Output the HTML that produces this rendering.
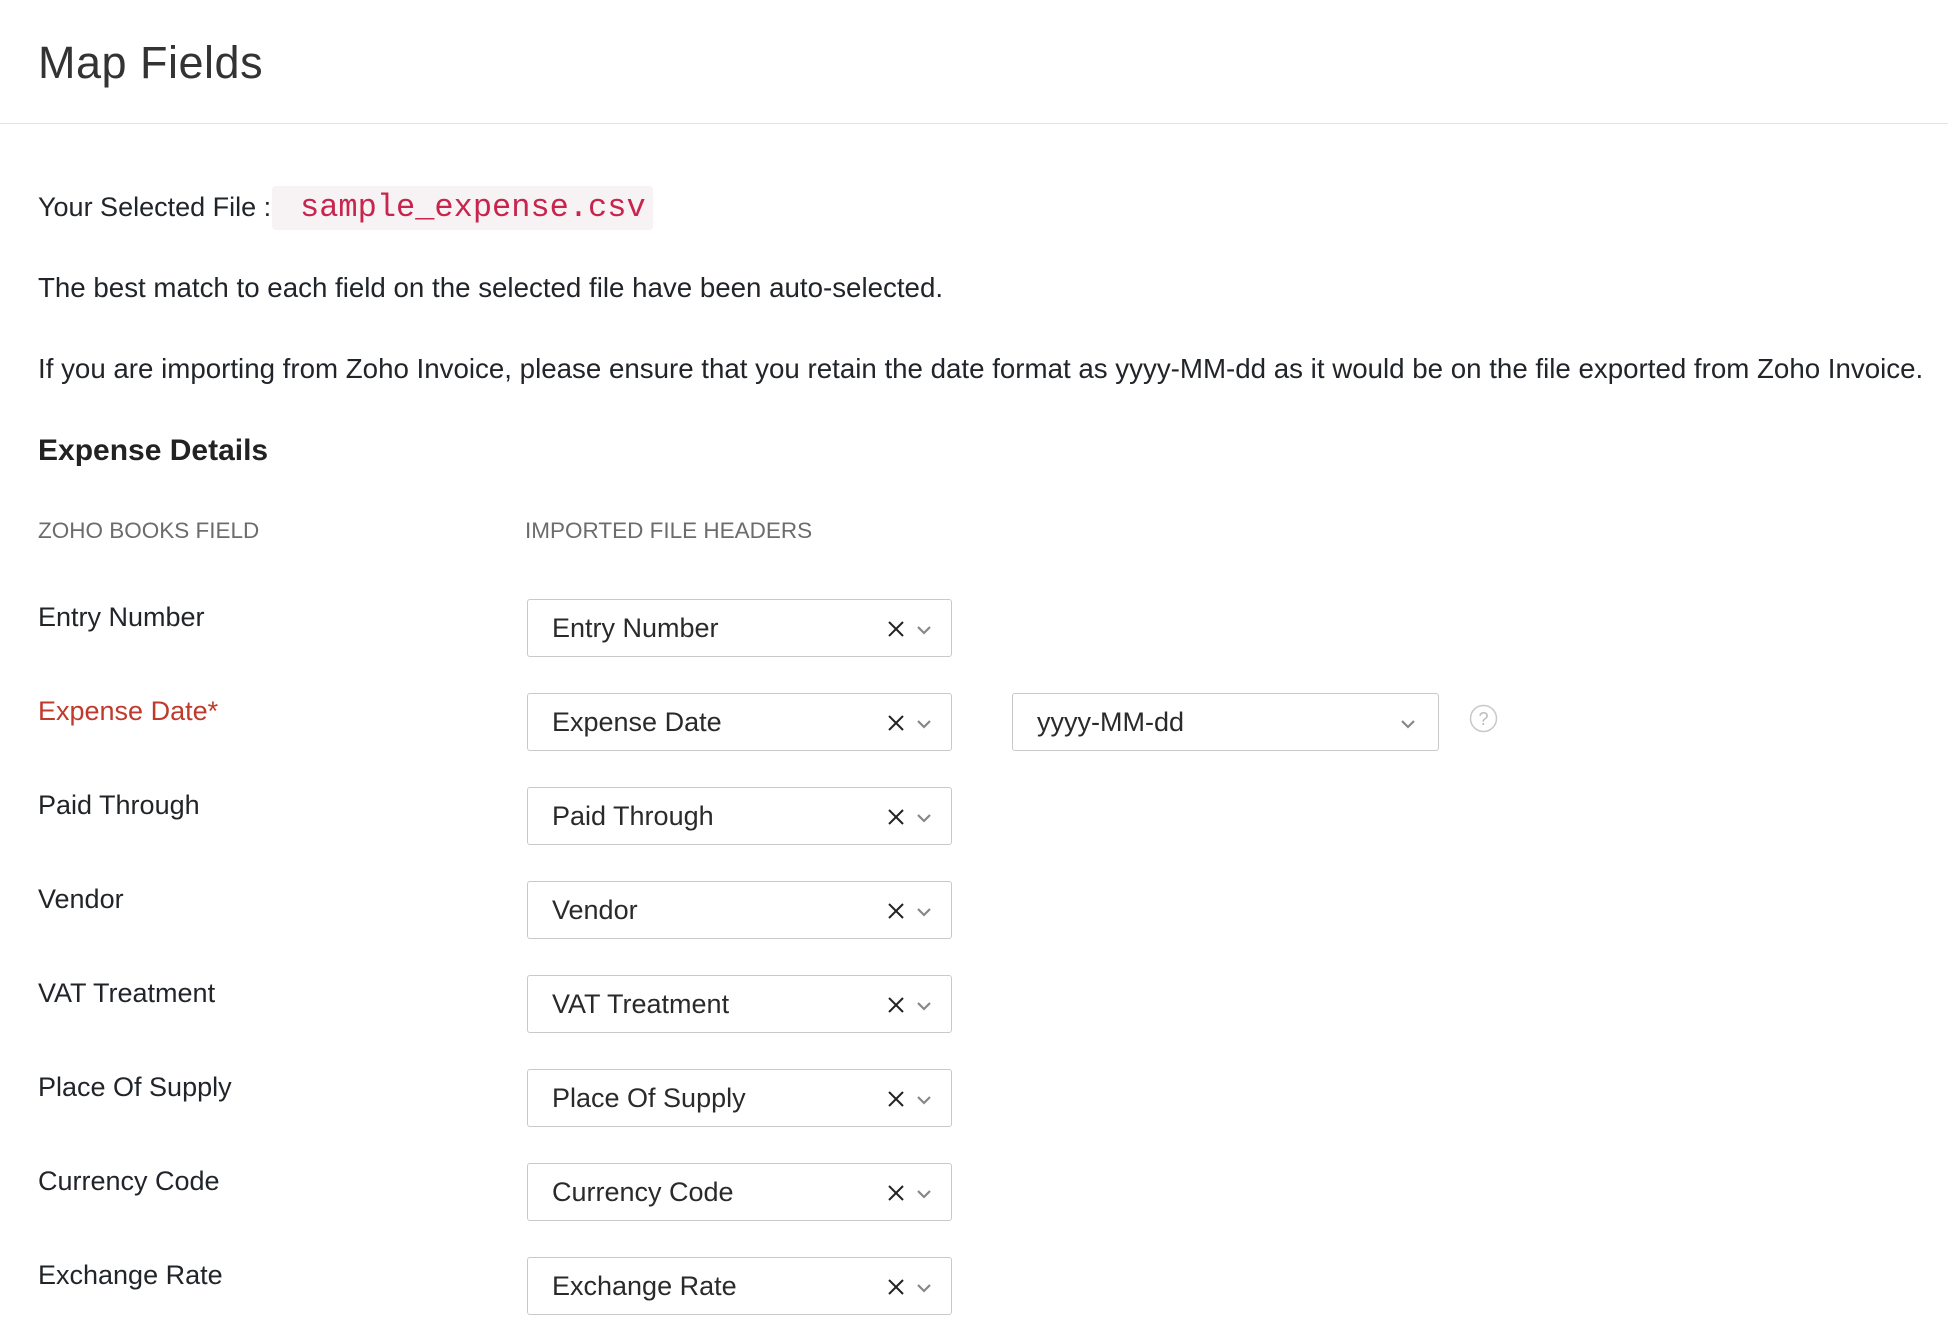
<!DOCTYPE html>
<html><head><meta charset="utf-8"><style>
*{margin:0;padding:0;box-sizing:border-box}
body{width:1948px;height:1340px;background:#fff;font-family:"Liberation Sans",sans-serif;color:#212529;position:relative;overflow:hidden}
.a{position:absolute;white-space:nowrap}
.hdr{position:absolute;left:0;top:0;width:1948px;height:124px;border-bottom:1px solid #e3e3e3}
.t{font-size:45px;left:38px;top:37px;color:#333;letter-spacing:0.5px}
.p{font-size:27.7px;left:38px}
.code{position:absolute;left:272px;top:186px;width:381px;height:44px;background:#f7f2f3;border-radius:4px;font-family:"Liberation Mono",monospace;color:#c7254e;font-size:32px;line-height:44px;padding-left:28px}
.h{font-size:22.5px;color:#6c6c6c;top:518px}
.lbl{font-size:27px;left:38px}
.box{position:absolute;left:527px;width:425px;height:58px;border:1px solid #c9c9c9;border-radius:3px;font-size:27px;line-height:56px;padding-left:24px;color:#2a2a2a}
.box .x{position:absolute;left:360px;top:21px}
.box .c{position:absolute;left:388px;top:25px}
</style></head><body>
<div class="hdr"></div>
<div class="a t">Map Fields</div>
<div class="a p" style="top:192px;font-size:27px">Your Selected File :</div>
<div class="code">sample_expense.csv</div>
<div class="a p" style="top:272px">The best match to each field on the selected file have been auto-selected.</div>
<div class="a p" style="top:353px">If you are importing from Zoho Invoice, please ensure that you retain the date format as yyyy-MM-dd as it would be on the file exported from Zoho Invoice.</div>
<div class="a" style="left:38px;top:434px;font-size:30px;font-weight:bold;color:#222">Expense Details</div>
<div class="a h" style="left:38px">ZOHO BOOKS FIELD</div>
<div class="a h" style="left:525px">IMPORTED FILE HEADERS</div>

<div class="a lbl" style="top:602px">Entry Number</div>
<div class="box" style="top:599px">Entry Number<svg class="x" width="16" height="16"><path d="M1 1l14 14M15 1L1 15" stroke="#222" stroke-width="2"/></svg><svg class="c" width="16" height="10"><path d="M2 2l6 6 6-6" stroke="#888" stroke-width="2.2" fill="none"/></svg></div>
<div class="a lbl" style="top:696px;color:#c0392b">Expense Date*</div>
<div class="box" style="top:693px">Expense Date<svg class="x" width="16" height="16"><path d="M1 1l14 14M15 1L1 15" stroke="#222" stroke-width="2"/></svg><svg class="c" width="16" height="10"><path d="M2 2l6 6 6-6" stroke="#888" stroke-width="2.2" fill="none"/></svg></div>
<div class="box" style="top:693px;left:1012px;width:427px">yyyy-MM-dd<svg class="c" width="16" height="10" style="left:387px"><path d="M2 2l6 6 6-6" stroke="#888" stroke-width="2.2" fill="none"/></svg></div>
<svg class="a" style="left:1469px;top:704px" width="29" height="29"><circle cx="14.5" cy="14.5" r="13" stroke="#c8c8c8" stroke-width="1.5" fill="none"/><text x="14.5" y="21" text-anchor="middle" font-size="18" fill="#bbb" font-family="Liberation Sans">?</text></svg>
<div class="a lbl" style="top:790px">Paid Through</div>
<div class="box" style="top:787px">Paid Through<svg class="x" width="16" height="16"><path d="M1 1l14 14M15 1L1 15" stroke="#222" stroke-width="2"/></svg><svg class="c" width="16" height="10"><path d="M2 2l6 6 6-6" stroke="#888" stroke-width="2.2" fill="none"/></svg></div>
<div class="a lbl" style="top:884px">Vendor</div>
<div class="box" style="top:881px">Vendor<svg class="x" width="16" height="16"><path d="M1 1l14 14M15 1L1 15" stroke="#222" stroke-width="2"/></svg><svg class="c" width="16" height="10"><path d="M2 2l6 6 6-6" stroke="#888" stroke-width="2.2" fill="none"/></svg></div>
<div class="a lbl" style="top:978px">VAT Treatment</div>
<div class="box" style="top:975px">VAT Treatment<svg class="x" width="16" height="16"><path d="M1 1l14 14M15 1L1 15" stroke="#222" stroke-width="2"/></svg><svg class="c" width="16" height="10"><path d="M2 2l6 6 6-6" stroke="#888" stroke-width="2.2" fill="none"/></svg></div>
<div class="a lbl" style="top:1072px">Place Of Supply</div>
<div class="box" style="top:1069px">Place Of Supply<svg class="x" width="16" height="16"><path d="M1 1l14 14M15 1L1 15" stroke="#222" stroke-width="2"/></svg><svg class="c" width="16" height="10"><path d="M2 2l6 6 6-6" stroke="#888" stroke-width="2.2" fill="none"/></svg></div>
<div class="a lbl" style="top:1166px">Currency Code</div>
<div class="box" style="top:1163px">Currency Code<svg class="x" width="16" height="16"><path d="M1 1l14 14M15 1L1 15" stroke="#222" stroke-width="2"/></svg><svg class="c" width="16" height="10"><path d="M2 2l6 6 6-6" stroke="#888" stroke-width="2.2" fill="none"/></svg></div>
<div class="a lbl" style="top:1260px">Exchange Rate</div>
<div class="box" style="top:1257px">Exchange Rate<svg class="x" width="16" height="16"><path d="M1 1l14 14M15 1L1 15" stroke="#222" stroke-width="2"/></svg><svg class="c" width="16" height="10"><path d="M2 2l6 6 6-6" stroke="#888" stroke-width="2.2" fill="none"/></svg></div>
</body></html>
